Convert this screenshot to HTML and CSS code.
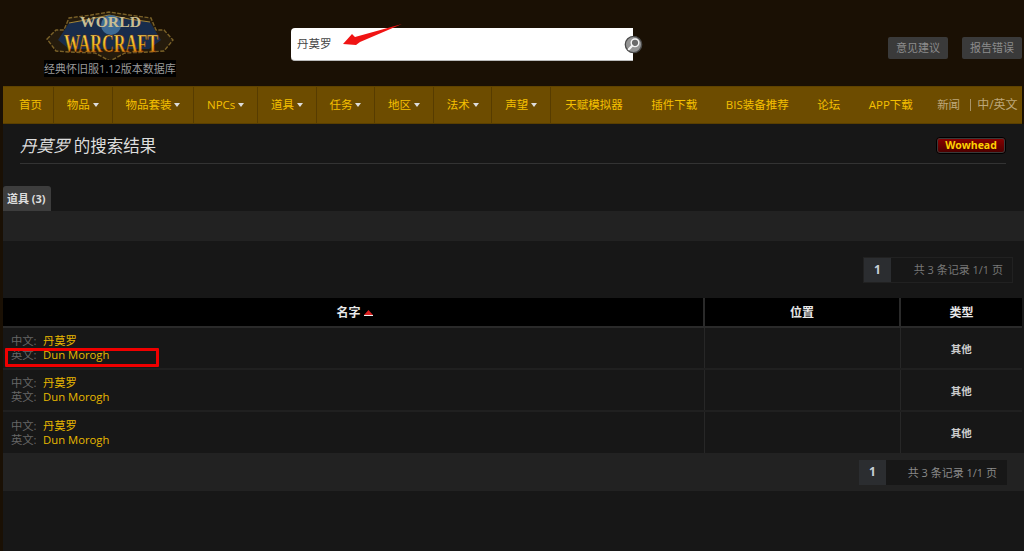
FILE: index.html
```html
<!DOCTYPE html>
<html lang="zh-CN">
<head>
  <meta charset="UTF-8" />
  <meta name="viewport" content="width=device-width, initial-scale=1.0"/>
  <title>丹莫罗 的搜索结果</title>
  <link rel="stylesheet" href="styles.css">
</head>
<body>
  <header class="top">
    <a class="logo">
      <svg class="logo-art" width="130" height="54" viewBox="0 0 130 54">
        <defs>
          <linearGradient id="gold" x1="0" y1="0" x2="0" y2="1">
            <stop offset="0" stop-color="#ffe97a"/>
            <stop offset="0.55" stop-color="#f0b51c"/>
            <stop offset="1" stop-color="#b8560f"/>
          </linearGradient>
        </defs>
        <path d="M2 30 L11 21 L19 21 L24 9 L46 6 L64 3 L84 6 L106 9 L111 21 L119 21 L128 31 L119 42 L104 43 L80 44 L65 52 L50 44 L24 43 L11 42 Z" fill="#251b0c" stroke="#7a6128" stroke-width="1.4" stroke-dasharray="4 1.5"/>
        <path d="M13 31 L24 14 L46 10 L64 6 L84 10 L105 13 L116 31 L104 40 L24 40 Z" fill="#182c4c"/>
        <path d="M24 14 L46 10 L64 6 L84 10 L105 13" fill="none" stroke="#a08338" stroke-width="1.2"/>
        <ellipse cx="66" cy="16" rx="10" ry="10" fill="#3d6a94"/>
        <text class="logo-world" transform="translate(35 18) scale(1.12 1)">WORLD</text>
        <text class="logo-craft" transform="translate(19 43) scale(.905 1.4)">WARCRAFT</text>
      </svg>
      <span class="logo-caption">经典怀旧服1.12版本数据库</span>
    </a>
    <form class="search">
      <div class="search-box">丹莫罗</div>
      <svg class="search-btn" width="19" height="19" viewBox="0 0 19 19">
        <circle cx="9.5" cy="9.5" r="8.2" fill="#949494" stroke="#4a4a4a" stroke-width="1.3"/>
        <circle cx="11" cy="7.8" r="3.8" fill="#6a6a6a" stroke="#f4f4f4" stroke-width="1.4"/>
        <path d="M8.2 10.8 L4.8 14.2" stroke="#f4f4f4" stroke-width="2.2" stroke-linecap="round"/>
      </svg>
      <svg class="arrow" width="64" height="26" viewBox="0 0 64 26">
        <path d="M62 1 L20 19 L16 22 L3 21 L12 11 L15 14 Z" fill="#f01414"/>
      </svg>
    </form>
    <div class="top-actions">
      <a class="top-btn">意见建议</a>
      <a class="top-btn">报告错误</a>
    </div>
  </header>

  <nav class="nav">
    <a class="nav-item nav-home sep">首页</a>
    <a class="nav-item sep">物品<i class="caret"></i></a>
    <a class="nav-item sep">物品套装<i class="caret"></i></a>
    <a class="nav-item sep">NPCs<i class="caret"></i></a>
    <a class="nav-item sep">道具<i class="caret"></i></a>
    <a class="nav-item sep">任务<i class="caret"></i></a>
    <a class="nav-item sep">地区<i class="caret"></i></a>
    <a class="nav-item sep">法术<i class="caret"></i></a>
    <a class="nav-item sep">声望<i class="caret"></i></a>
    <a class="nav-item nav-plain">天赋模拟器</a>
    <a class="nav-item nav-plain">插件下载</a>
    <a class="nav-item nav-plain">BIS装备推荐</a>
    <a class="nav-item nav-plain">论坛</a>
    <a class="nav-item nav-plain">APP下载</a>
    <a class="nav-item nav-news">新闻</a>
    <a class="nav-lang">中/英文</a>
  </nav>

  <main class="content">
    <div class="title-row">
      <h1 class="title"><em>丹莫罗</em> 的搜索结果</h1>
      <a class="wowhead">Wowhead</a>
    </div>

    <div class="tabs"><a class="tab">道具 (3)</a></div>
    <div class="tab-bar"></div>

    <div class="pager pager-top">
      <span class="page-num">1</span>
      <span class="page-info">共 3 条记录 1/1 页</span>
    </div>

    <table class="results">
      <thead>
        <tr>
          <th class="col-name">名字
            <svg class="sort" width="9" height="6" viewBox="0 0 9 6"><path d="M4.5 0 L9 5 L0 5 Z" fill="#d92020"/><path d="M0 5.5 H9" stroke="#eee" stroke-width="1"/></svg>
          </th>
          <th class="col-pos">位置</th>
          <th class="col-type">类型</th>
        </tr>
      </thead>
      <tbody>
        <tr>
          <td class="name">
            <div class="name-line"><span class="lang">中文:</span><a>丹莫罗</a></div>
            <div class="name-line"><span class="lang">英文:</span><a>Dun Morogh</a></div>
            <span class="mark"></span>
          </td>
          <td></td>
          <td class="kind">其他</td>
        </tr>
        <tr>
          <td class="name">
            <div class="name-line"><span class="lang">中文:</span><a>丹莫罗</a></div>
            <div class="name-line"><span class="lang">英文:</span><a>Dun Morogh</a></div>
          </td>
          <td></td>
          <td class="kind">其他</td>
        </tr>
        <tr>
          <td class="name">
            <div class="name-line"><span class="lang">中文:</span><a>丹莫罗</a></div>
            <div class="name-line"><span class="lang">英文:</span><a>Dun Morogh</a></div>
          </td>
          <td></td>
          <td class="kind">其他</td>
        </tr>
      </tbody>
    </table>

    <div class="table-foot">
      <div class="pager pager-bottom">
        <span class="page-num">1</span>
        <span class="page-info">共 3 条记录 1/1 页</span>
      </div>
    </div>
  </main>
</body>
</html>
```

FILE: styles.css
```css
* {
  margin: 0;
  padding: 0;
  box-sizing: border-box;
}
html, body {
  height: 551px;
  overflow: hidden;
}
body {
  font-family: "Open Sans", "Noto Sans CJK SC", sans-serif;
  font-size: 12px;
  background: #1a1004;
  color: #ddd;
}

/* header */
.top {
  height: 86px;
  display: flex;
  padding-left: 44px;
}
.logo {
  width: 132px;
  padding-top: 9px;
  display: flex;
  flex-direction: column;
  align-items: center;
}
.logo-art {
  display: block;
  flex: none;
}
.logo-world {
  font-family: "Liberation Serif", serif;
  font-size: 14px;
  font-weight: bold;
  fill: #c9bd92;
}
.logo-craft {
  font-family: "Liberation Serif", serif;
  font-size: 18px;
  font-weight: bold;
  fill: url(#gold);
  stroke: #5a2408;
  stroke-width: 0.4px;
}
.logo-caption {
  width: 132px;
  height: 17px;
  margin-top: -3px;
  background: #000;
  color: #9a9a9a;
  font-size: 11px;
  line-height: 17px;
  text-align: center;
  white-space: nowrap;
}
.search {
  position: relative;
  margin: 28px 0 0 115px;
  width: 342px;
  height: 33px;
}
.search-box {
  height: 33px;
  padding-left: 6px;
  background: #fff;
  border-radius: 4px 0 0 4px;
  border-bottom: 1px solid #bbb;
  color: #444;
  font-size: 11.5px;
  line-height: 32px;
}
.search-btn {
  position: absolute;
  top: 7px;
  right: -10px;
}
.arrow {
  position: absolute;
  top: -5px;
  left: 49px;
}
.top-actions {
  margin: 37px 0 0 255px;
  display: flex;
  gap: 14px;
}
.top-btn {
  width: 60px;
  height: 22px;
  background: #3a3a3a;
  border-radius: 2px;
  color: #8c8c8c;
  font-size: 11px;
  line-height: 22px;
  text-align: center;
}

/* nav */
.nav {
  height: 38px;
  margin: 0 2px 0 3px;
  background: #6d4c00;
  display: flex;
  align-items: stretch;
  border-top: 1px solid #5f4300;
  border-bottom: 1px solid #5a3f00;
  font-size: 11.5px;
}
.nav-item {
  padding: 0 12.8px;
  color: #f5c000;
  line-height: 36px;
  white-space: nowrap;
}
.nav-home {
  padding: 0 11px 0 16px;
}
.nav-plain {
  padding: 0 14.25px;
}
.sep {
  border-right: 1px solid #573c00;
}
.nav-news {
  padding: 0 10px 0 10px;
  color: #bda77a;
}
.nav-lang {
  height: 12px;
  margin-top: 12px;
  padding-left: 6px;
  border-left: 1px solid #a89468;
  color: #bda77a;
  font-size: 12px;
  line-height: 12px;
  white-space: nowrap;
}
.caret {
  display: inline-block;
  margin-left: 3px;
  vertical-align: 2px;
  border-top: 4px solid #ddd;
  border-left: 3px solid transparent;
  border-right: 3px solid transparent;
}

/* content */
.content {
  height: 427px;
  margin-left: 3px;
  background: #171717;
}
.title-row {
  position: relative;
  margin: 0 18px 0 17px;
  height: 40px;
  border-bottom: 1px solid #333;
}
.title {
  padding-top: 10px;
  color: #ddd;
  font-size: 16.5px;
  font-weight: normal;
  line-height: 24px;
}
.title em {
  font-style: italic;
}
.wowhead {
  position: absolute;
  top: 13px;
  right: 0;
  width: 70px;
  height: 17px;
  background: linear-gradient(#8a0000, #4a0000);
  border: 1px solid #000;
  outline: 1px solid #3a3a3a;
  outline-offset: -2px;
  border-radius: 4px;
  color: #ffd100;
  font-size: 10.5px;
  font-weight: bold;
  line-height: 14px;
  text-align: center;
}
.tabs {
  padding-top: 22px;
  display: flex;
}
.tab {
  width: 48px;
  height: 25px;
  background: #3d3d3d;
  border-radius: 3px 3px 0 0;
  color: #ddd;
  font-size: 11px;
  font-weight: bold;
  line-height: 25px;
  padding-left: 4px;
  white-space: nowrap;
}
.tab-bar {
  height: 30px;
  background: #222;
}
.pager {
  display: flex;
  height: 26px;
  font-size: 11px;
}
.pager-top {
  width: 150px;
  margin: 16px 0 15px 860px;
  border: 1px solid #212121;
}
.page-num {
  width: 27px;
  background: #2b2d30;
  color: #c8d0d8;
  font-size: 12px;
  font-weight: bold;
  line-height: 24px;
  text-align: center;
}
.pager-top .page-info {
  flex: 1;
  padding-right: 9px;
  color: #777;
  line-height: 24px;
  text-align: right;
}

/* table */
.results {
  width: 1019px;
  height: 155px;
  border-collapse: collapse;
  table-layout: fixed;
}
.results th {
  height: 29px;
  background: #000;
  border-right: 2px solid #2a2a2a;
  border-bottom: 2px solid #2a2a2a;
  color: #e8e8e8;
  font-size: 12px;
  text-align: center;
}
.results .col-name {
  padding-left: 3px;
}
.results .col-pos {
  width: 196px;
}
.results .col-type {
  width: 122px;
}
.results th:last-child,
.results td:last-child {
  border-right: 0;
}
.results td {
  height: 42px;
  border-right: 1px solid #272727;
  border-bottom: 2px solid #202020;
}
.results tbody tr:last-child td {
  border-bottom: 0;
}
.sort {
  vertical-align: 1px;
}
.name {
  position: relative;
  padding-left: 8px;
}
.name-line {
  height: 14px;
  line-height: 14px;
  font-size: 11.3px;
  white-space: nowrap;
}
.lang {
  display: inline-block;
  width: 32px;
  color: #666;
}
.name-line a {
  color: #e8b800;
}
.mark {
  position: absolute;
  top: 20px;
  left: 2px;
  width: 154px;
  height: 19px;
  border: 3px solid #f00000;
  border-radius: 1px;
}
.kind {
  color: #ccc;
  font-size: 10.5px;
  font-weight: bold;
  text-align: center;
}
.table-foot {
  height: 38px;
  background: #222;
  padding: 7px 0 0 856px;
}
.pager-bottom {
  width: 148px;
  height: 25px;
}
.pager-bottom .page-info {
  flex: 1;
  padding-right: 10px;
  background: #171717;
  color: #8a8a8a;
  line-height: 25px;
  text-align: right;
}
```
